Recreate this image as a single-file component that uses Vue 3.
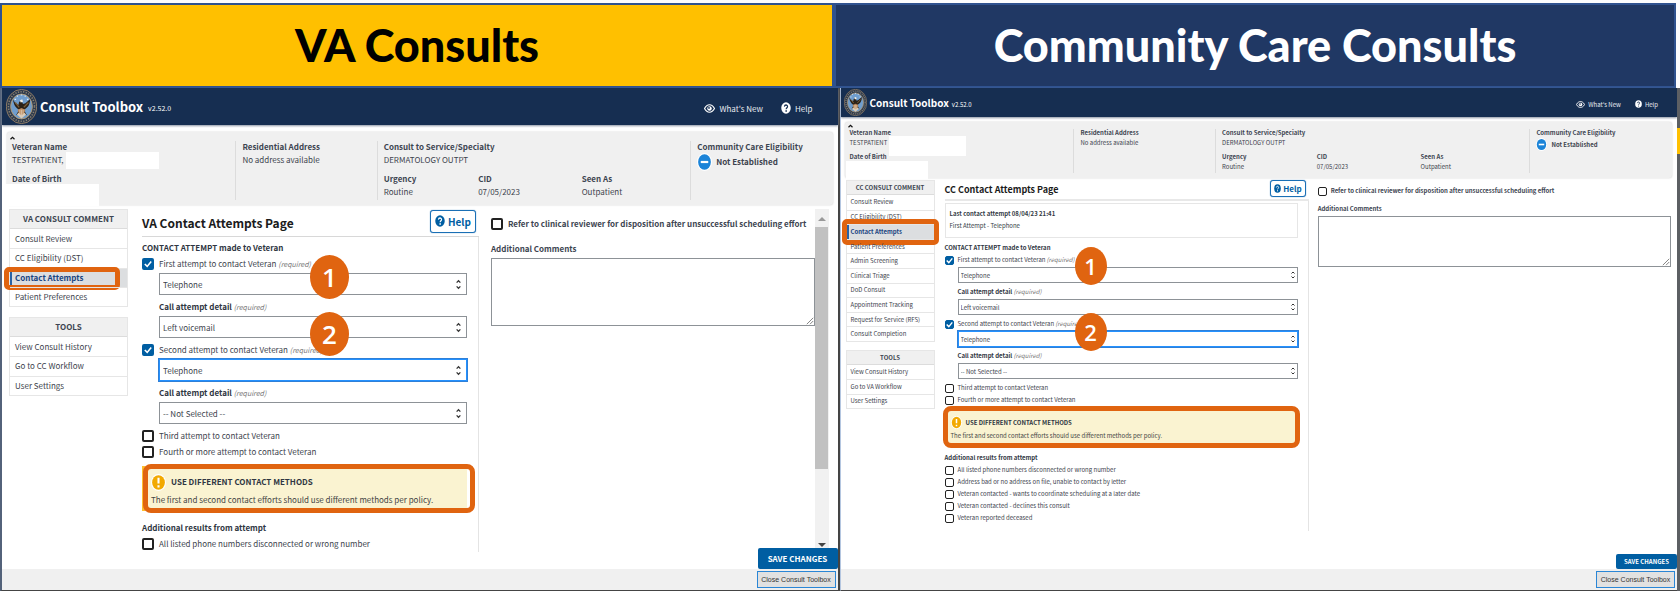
<script setup>
import { reactive } from 'vue'

const methods = ['Telephone', 'Letter', '-- Not Selected --']
const details = ['-- Not Selected --', 'Left voicemail', 'No answer']
const tools = (other) => ['View Consult History', `Go to ${other} Workflow`, 'User Settings']

const panels = reactive([
  {
    id: 'va',
    title: 'VA Contact Attempts Page',
    name: 'TESTPATIENT,',
    menuTitle: 'VA CONSULT COMMENT',
    menu: ['Consult Review', 'CC Eligibility (DST)', 'Contact Attempts', 'Patient Preferences'],
    tools: tools('CC'),
    last: null,
    refer: false,
    comments: '',
    scroll: true,
    attempts: [
      { label: 'First attempt to contact Veteran', on: true, method: 'Telephone', detail: 'Left voicemail', focus: false },
      { label: 'Second attempt to contact Veteran', on: true, method: 'Telephone', detail: '-- Not Selected --', focus: true },
    ],
    more: [
      { label: 'Third attempt to contact Veteran', on: false },
      { label: 'Fourth or more attempt to contact Veteran', on: false },
    ],
    results: [{ label: 'All listed phone numbers disconnected or wrong number', on: false }],
  },
  {
    id: 'cc',
    title: 'CC Contact Attempts Page',
    name: 'TESTPATIENT',
    menuTitle: 'CC CONSULT COMMENT',
    menu: [
      'Consult Review', 'CC Eligibility (DST)', 'Contact Attempts', 'Patient Preferences', 'Admin Screening',
      'Clinical Triage', 'DoD Consult', 'Appointment Tracking', 'Request for Service (RFS)', 'Consult Completion',
    ],
    tools: tools('VA'),
    last: { when: 'Last contact attempt 08/04/23 21:41', what: 'First Attempt - Telephone' },
    refer: false,
    comments: '',
    scroll: false,
    attempts: [
      { label: 'First attempt to contact Veteran', on: true, method: 'Telephone', detail: 'Left voicemail', focus: false },
      { label: 'Second attempt to contact Veteran', on: true, method: 'Telephone', detail: '-- Not Selected --', focus: true },
    ],
    more: [
      { label: 'Third attempt to contact Veteran', on: false },
      { label: 'Fourth or more attempt to contact Veteran', on: false },
    ],
    results: [
      { label: 'All listed phone numbers disconnected or wrong number', on: false },
      { label: 'Address bad or no address on file, unable to contact by letter', on: false },
      { label: 'Veteran contacted - wants to coordinate scheduling at a later date', on: false },
      { label: 'Veteran contacted - declines this consult', on: false },
      { label: 'Veteran reported deceased', on: false },
    ],
  },
])
</script>

<template>
  <div class="page">
    <div class="banners">
      <h1 class="banner banner-va">VA Consults</h1>
      <h1 class="banner banner-cc">Community Care Consults</h1>
    </div>

    <div class="windows">
      <section v-for="p in panels" :key="p.id" class="window" :class="p.id">
        <header class="top">
          <svg class="seal" viewBox="0 0 40 44" preserveAspectRatio="none" aria-hidden="true">
            <ellipse cx="20" cy="22" rx="19.5" ry="21.5" fill="#2d3a4d" stroke="#a98d6b" stroke-width="1" />
            <ellipse cx="20" cy="22" rx="16.8" ry="18.6" fill="none" stroke="#8b8273" stroke-width="2" stroke-dasharray="1.6 1.8" />
            <ellipse cx="20" cy="22" rx="14" ry="15.6" fill="#6f9dcd" stroke="#b59a72" stroke-width="1.2" />
            <path d="M11 13h2M27 13h2M14 9h1.5M24 9h1.5M19 7.5h2" stroke="#dce8f5" stroke-width="1.4" />
            <path d="M9 13c1 8 4 11 8 13l-4 7 5-2 2 4 2-4 5 2-4-7c5-2 8-6 8-13l-6 5-3 1-2-4-3 1-1 4-4-2z" fill="#2a2118" />
            <path d="M12 17l5 6M29 17l-6 6" stroke="#7b5d36" stroke-width="1.6" />
            <path d="M18 14l3-1 1 3-3 1z" fill="#f3efe6" />
            <path d="M15 26l5-2 5 2-2 6-3 3-3-3z" fill="#b9875a" />
            <path d="M14 32l6 5 6-5-2-2-4 3-4-3z" fill="#d9cbb8" />
            <path d="M18 26v6M20 26v7M22 26v6" stroke="#e8d9c4" stroke-width=".8" />
          </svg>
          <strong class="brand">Consult Toolbox</strong>
          <span class="version">v2.52.0</span>
          <nav class="top-links">
            <a href="#whats-new">
              <svg class="eye" viewBox="0 0 22 18" preserveAspectRatio="none" aria-hidden="true">
                <path d="M1 9C4 3.500 7.500 1.500 11 1.500S18 3.500 21 9c-3 5.500-6.500 7.500-10 7.500S4 14.500 1 9z" fill="none" stroke="#fff" stroke-width="2.400" />
                <circle cx="11" cy="9" r="4.500" fill="#fff" />
                <circle cx="10" cy="7.800" r="1.800" fill="#162e51" />
              </svg>What's New
            </a>
            <a href="#help">
              <svg class="q" viewBox="0 0 20 20" preserveAspectRatio="none" aria-hidden="true">
                <circle cx="10" cy="10" r="9.500" fill="#fff" />
                <path d="M6.800 7.800C7 5.800 8.400 5 10 5c1.800 0 3.200 1 3.200 2.600 0 2.200-3 2.200-3 4.400" fill="none" stroke="#162e51" stroke-width="2.200" />
                <circle cx="10.200" cy="15" r="1.500" fill="#162e51" />
              </svg>Help
            </a>
          </nav>
        </header>

        <section class="patient" aria-label="Patient">
          <svg class="caret" viewBox="0 0 10 7" aria-hidden="true"><path d="M1 6l4-4 4 4" fill="none" stroke="#111" stroke-width="2.400" /></svg>
          <dl class="who">
            <dt>Veteran Name</dt>
            <dd>{{ p.name }}</dd>
            <dt>Date of Birth</dt>
          </dl>
          <i class="mask mask-name"></i>
          <i class="mask mask-dob"></i>
          <dl>
            <dt>Residential Address</dt>
            <dd>No address available</dd>
          </dl>
          <div class="consult">
            <dl class="wide"><dt>Consult to Service/Specialty</dt><dd>DERMATOLOGY OUTPT</dd></dl>
            <dl><dt>Urgency</dt><dd>Routine</dd></dl>
            <dl><dt>CID</dt><dd>07/05/2023</dd></dl>
            <dl><dt>Seen As</dt><dd>Outpatient</dd></dl>
          </div>
          <dl>
            <dt>Community Care Eligibility</dt>
            <dd class="status">
              <svg viewBox="0 0 16 18" preserveAspectRatio="none" aria-hidden="true">
                <ellipse cx="8" cy="9" rx="8" ry="9" fill="#fff" />
                <ellipse cx="8" cy="9" rx="6.800" ry="7.700" fill="#1c84d8" />
                <path d="M4 9h8" stroke="#fff" stroke-width="2.200" />
              </svg>
              Not Established
            </dd>
          </dl>
        </section>

        <div class="body">
          <aside>
            <nav class="menu">
              <h3>{{ p.menuTitle }}</h3>
              <ul>
                <li v-for="m in p.menu" :key="m" :class="{ active: m === 'Contact Attempts' }">
                  <a :href="'#' + p.id + '-' + m.toLowerCase().replace(/[^a-z]+/g, '-')">{{ m }}</a>
                </li>
              </ul>
            </nav>
            <nav class="menu tools">
              <h3>TOOLS</h3>
              <ul>
                <li v-for="m in p.tools" :key="m">
                  <a :href="'#' + p.id + '-' + m.toLowerCase().replace(/[^a-z]+/g, '-')">{{ m }}</a>
                </li>
              </ul>
            </nav>
          </aside>

          <main>
            <div class="title">
              <h2>{{ p.title }}</h2>
              <button type="button" class="help">
                <svg viewBox="0 0 20 20" preserveAspectRatio="none" aria-hidden="true">
                  <circle cx="10" cy="10" r="9.500" fill="#005ea2" />
                  <path d="M6.800 7.800C7 5.800 8.400 5 10 5c1.800 0 3.200 1 3.200 2.600 0 2.200-3 2.200-3 4.400" fill="none" stroke="#fff" stroke-width="2.200" />
                  <circle cx="10.200" cy="15" r="1.500" fill="#fff" />
                </svg>Help
              </button>
            </div>

            <div class="form">
              <div v-if="p.last" class="last">
                <strong>{{ p.last.when }}</strong>
                <span>{{ p.last.what }}</span>
              </div>
              <h3>CONTACT ATTEMPT made to Veteran</h3>
              <div v-for="(a, i) in p.attempts" :key="a.label" class="attempt">
                <label class="check"><input v-model="a.on" type="checkbox" />{{ a.label }} <em>(required)</em></label>
                <div class="pick" :class="{ focus: a.focus }">
                  <select v-model="a.method" :aria-label="a.label + ' method'">
                    <option v-for="m in methods" :key="m">{{ m }}</option>
                  </select>
                  <svg viewBox="0 0 8 16" aria-hidden="true"><path d="M1 5l3-3 3 3M1 11l3 3 3-3" /></svg>
                </div>
                <label class="detail" :for="p.id + '-detail-' + i"><b>Call attempt detail</b> <em>(required)</em></label>
                <div class="pick">
                  <select :id="p.id + '-detail-' + i" v-model="a.detail">
                    <option v-for="d in details" :key="d">{{ d }}</option>
                  </select>
                  <svg viewBox="0 0 8 16" aria-hidden="true"><path d="M1 5l3-3 3 3M1 11l3 3 3-3" /></svg>
                </div>
                <span class="badge">{{ i + 1 }}</span>
              </div>
              <label v-for="c in p.more" :key="c.label" class="check"><input v-model="c.on" type="checkbox" />{{ c.label }}</label>

              <div class="alert" role="alert">
                <strong>
                  <svg viewBox="0 0 16 18" preserveAspectRatio="none" aria-hidden="true">
                    <ellipse cx="8" cy="9" rx="8" ry="9" fill="#fff" />
                    <ellipse cx="8" cy="9" rx="6.800" ry="7.800" fill="#f2a900" />
                    <path d="M8 4v6M8 12v2.200" stroke="#fff" stroke-width="2.200" />
                  </svg>
                  USE DIFFERENT CONTACT METHODS
                </strong>
                <p>The first and second contact efforts should use different methods per policy.</p>
              </div>

              <h3>Additional results from attempt</h3>
              <label v-for="c in p.results" :key="c.label" class="check"><input v-model="c.on" type="checkbox" />{{ c.label }}</label>
            </div>
          </main>

          <div class="side">
            <label class="check refer"><input v-model="p.refer" type="checkbox" />Refer to clinical reviewer for disposition after unsuccessful scheduling effort</label>
            <label class="comments-label" :for="p.id + '-comments'">Additional Comments</label>
            <div class="comments">
              <textarea :id="p.id + '-comments'" v-model="p.comments"></textarea>
              <svg viewBox="0 0 10 10" aria-hidden="true"><path d="M1 9l8-8M5 9l4-4" stroke="#666" fill="none" /></svg>
            </div>
          </div>

          <div v-if="p.scroll" class="scrollbar" aria-hidden="true">
            <svg viewBox="0 0 8 5"><path d="M0 5l4-4 4 4z" fill="#999" /></svg>
            <i></i>
            <svg viewBox="0 0 8 5"><path d="M0 0h8l-4 4z" fill="#444" /></svg>
          </div>
        </div>

        <div class="actions"><button type="button" class="save">SAVE CHANGES</button></div>
        <footer><button type="button" class="close">Close Consult Toolbox</button></footer>
      </section>
      <div class="edge" aria-hidden="true"><i></i></div>
    </div>
  </div>
</template>

<style>
body { margin: 0; background: #fff; }
</style>

<style scoped>
* { box-sizing: border-box; }
h1, h2, h3, p, ul, dl, dd { margin: 0; padding: 0; }
ul { list-style: none; }
a { color: inherit; text-decoration: none; }
button, select, textarea, input { font: inherit; margin: 0; }

.page {
  min-height: 100vh;
  display: flex;
  flex-direction: column;
  padding-top: 3px;
  background: #fcfcfd;
  font-family: "Noto Sans CJK JP", "Open Sans", sans-serif;
  color: #3d434d;
}
.banners { display: flex; padding-right: 4px; }
.banner {
  border: 2px solid #2f528f;
  line-height: 81px;
  font-family: Lato, sans-serif;
  font-weight: 900;
  font-size: 45px;
  text-align: center;
}
.banner-va { flex: 834; background: #ffc000; color: #000; }
.banner-cc { flex: 842; background: #203864; color: #fff; }

.windows { flex: 1; display: flex; }
.window { display: flex; flex-direction: column; background: #fff; border-bottom: 1px solid #444; min-width: 0; }

/* Size set of the larger window */
.va {
  --fs: 8px; --em: 7px; --brand: 13px; --head: 12px; --help: 10px;
  --row: 16px; --pick: 22px; --box: 12px; --gap: 4px; --indent: 17px; --lead: 4px;
  flex: 838;
  border-left: 2px solid #53627a;
  border-right: 2px solid #444;
}
/* Size set of the smaller window */
.cc {
  --fs: 6px; --em: 6px; --brand: 10px; --head: 9px; --help: 8px;
  --row: 12px; --pick: 16px; --box: 9px; --gap: 3px; --indent: 13px; --lead: 3px;
  flex: 839;
  border-left: 1px solid #b4c6e0;
}

.top { display: flex; align-items: center; height: 37px; background: #162e51; color: #fff; padding: 0 25px 0 4px; box-shadow: 0 1px 2px #8a93a3; }
.cc .top { height: 29px; padding: 0 19px 0 3px; }
.seal { width: 31px; height: 35px; }
.cc .seal { width: 23px; height: 27px; }
.brand { font-size: var(--brand); margin-left: 3px; }
.version { font-size: var(--em); margin-left: 5px; padding-top: 3px; }
.cc .version { margin-left: 3px; }
.top-links { margin-left: auto; display: flex; gap: 18px; font-size: var(--fs); padding-top: 3px; }
.cc .top-links { gap: 14px; }
.top-links a { display: flex; align-items: center; gap: 4px; color: #e8ebf0; }
.cc .top-links a { gap: 3px; }
.eye { width: 11px; height: 9px; }
.q { width: 10px; height: 12px; }
.cc .eye { width: 9px; height: 7px; }
.cc .q { width: 7px; height: 8px; }

.patient {
  position: relative;
  display: grid;
  grid-template-columns: 228fr 141fr 313fr 142fr;
  margin: 7px 5px 0;
  height: 73px;
  padding: 9px 0 6px;
  background: #f0f0f0;
  border-radius: 3px;
  box-shadow: 0 0 2px #ccc;
  font-size: var(--fs);
}
.cc .patient { margin: 5px 5px 0 4px; height: 56px; padding: 7px 0 5px; }
.patient > * { min-width: 0; }
.patient > * + dl, .consult { border-left: 1px solid #dcdcdc; padding-left: 6px; }
.patient .who { border: 0; padding-left: 5px; }
.patient dt { font-weight: 700; line-height: 11px; color: #3d4551; white-space: nowrap; }
.patient dd { line-height: 16px; white-space: nowrap; }
.patient .who dd + dt { margin-top: 5px; }
.cc .patient dt { line-height: 8px; }
.cc .patient dd { line-height: 12px; }
.cc .patient .who dd + dt { margin-top: 4px; }
.consult { display: grid; grid-template-columns: 94fr 103fr 108fr; align-content: start; row-gap: 5px; }
.cc .consult { row-gap: 4px; }
.wide { grid-column: 1 / -1; }
.patient .status { display: flex; align-items: center; gap: 4px; font-weight: 700; line-height: 20px; }
.va .status { font-size: 8px; }
.cc .status { font-size: 6px; }
.cc .patient .status { line-height: 15px; }
.status svg { width: 15px; height: 18px; }
.cc .status svg { width: 11px; height: 13px; }
.caret { position: absolute; left: 3px; top: 4px; width: 5px; height: 4px; }
.cc .caret { top: 2px; }
.mask { position: absolute; background: #fff; }
.mask-name { left: 59px; top: 20px; width: 93px; height: 17px; }
.mask-dob { left: -2px; top: 52px; width: 94px; height: 22px; }
.cc .mask-name { left: 44px; top: 14px; width: 77px; height: 20px; }
.cc .mask-dob { left: 1px; top: 39px; width: 82px; height: 18px; }

.body { flex: 1; display: flex; padding: 4px 9px 0 7px; }
.cc .body { padding: 2px 6px 24px 5px; }
aside { flex: 0 0 119px; font-size: var(--fs); }
.cc aside { flex-basis: 89px; }
.menu { border: 1px solid #e6e6e6; }
.tools { margin-top: 10px; }
.cc .tools { margin-top: 8px; }
.menu h3 { font-size: var(--fs); line-height: 18px; text-align: center; background: #f0f0f0; border-bottom: 1px solid #dcdcdc; color: #3d4551; white-space: nowrap; }
.cc .menu h3 { line-height: 13px; }
.menu ul { display: grid; grid-auto-rows: 1fr; min-height: 77px; }
.menu.tools ul { min-height: 58px; }
.cc .menu ul { min-height: 146px; }
.cc .menu.tools ul { min-height: 43px; }
.menu li { position: relative; display: flex; align-items: center; padding-left: 5px; white-space: nowrap; line-height: 12px; }
.menu li + li { border-top: 1px solid #e6e6e6; }
.cc .menu li { padding-left: 4px; }
.menu .active { background: #dcdee0; box-shadow: inset 2px 0 #2a62a5; font-weight: 700; color: #1a4480; }
.active::after { content: ""; position: absolute; inset: -2px 7px -3px -6px; border: 5px solid #e06410; border-radius: 5px; }
.cc .active::after { inset: -6px -5px -6px -5px; }

main { flex: 351 1 0; min-width: 0; padding: 0 0 0 14px; font-size: var(--fs); }
.cc main { flex: 373 1 0; padding: 0 0 0 10px; }
.title { display: flex; justify-content: space-between; align-items: center; height: 28px; border-bottom: 1px solid #d8d8d8; }
.cc .title { height: 21px; border-bottom: 2px solid #e8e8e8; }
.title h2 { font-size: var(--head); line-height: 20px; color: #1b1b1b; white-space: nowrap; }
.cc .title h2 { line-height: 16px; }
.help { display: flex; align-items: center; gap: 3px; height: 23px; padding: 0 4px; margin: 0 3px 3px 0; border: 1px solid #1a6fb5; border-radius: 3px; background: #fff; color: #005ea2; font-weight: 700; font-size: var(--help); box-shadow: 0 0 1px #1a6fb5; }
.cc .help { height: 17px; padding: 0 3px; gap: 2px; }
.help svg { width: 10px; height: 12px; }
.cc .help svg { width: 7px; height: 9px; }

.form { padding: 3px 11px 0 0; border-right: 1px solid #e4e4e4; }
.cc .form { padding: 2px 10px 7px 0; }
.form h3 { font-size: var(--fs); line-height: var(--row); color: #2f3642; white-space: nowrap; }
.last { display: grid; border: 1px solid #e6e6e6; padding: 4px 4px 5px; margin-bottom: 4px; line-height: 12px; color: #333a45; }
.check { display: flex; align-items: center; gap: 5px; line-height: var(--row); height: var(--row); white-space: nowrap; }
.cc .check { gap: 4px; }
.check input { appearance: none; flex: none; width: var(--box); height: var(--box); border: 2px solid #222; border-radius: 2px; background: #fff; }
.cc .check input { border-width: 1px; }
.check input:checked {
  border-color: #005ea2;
  background: #005ea2 url("data:image/svg+xml,%3Csvg xmlns='http://www.w3.org/2000/svg' viewBox='0 0 10 10'%3E%3Cpath d='M1 5l3 3 5-6' fill='none' stroke='white' stroke-width='2'/%3E%3C/svg%3E") center / 8px 8px no-repeat;
}
.cc .check input:checked { background-size: 7px 7px; }
em { font-size: var(--em); line-height: 1; color: #777; }
.check em { margin-left: -3px; }
.attempt { position: relative; display: grid; padding-bottom: var(--gap); }
.pick { position: relative; margin-left: var(--indent); display: grid; margin-top: 1px; }
.pick select { appearance: none; height: var(--pick); padding: 0 3px; border: 1px solid #8d9297; border-radius: 0; background: #fff; color: #3d434d; }
.cc .pick select { padding: 0 2px; }
.pick.focus select { border-color: #2491ff; outline: 1px solid #2f80d8; }
.pick svg { position: absolute; right: 6px; top: 25%; height: 50%; width: 5px; fill: none; stroke: #333; stroke-width: 2; pointer-events: none; }
.cc .pick svg { right: 3px; width: 4px; }
.detail { margin: var(--lead) 0 0 var(--indent); line-height: var(--row); color: #2f3642; white-space: nowrap; }
.badge {
  position: absolute; left: 168px; top: -1px; z-index: 2;
  display: grid; place-items: center;
  width: 39px; height: 44px; border-radius: 50%;
  background: #e06410; color: #fff; font: 600 26px "Open Sans", sans-serif;
}
.attempt + .attempt .badge { top: -30px; }
.cc .badge { left: 130px; top: -7px; width: 32px; height: 38px; font-size: 22px; }
.cc .attempt + .attempt .badge { top: -5px; }

.alert { position: relative; display: grid; margin: 6px 0 9px; padding: 7px 4px 2px 6px; background: #faf3d1; border-left: 3px solid #ffbe2e; color: #2f3642; }
.alert::after { content: ""; position: absolute; inset: -2px -8px -2px -2px; border: 5px solid #e06410; border-radius: 8px; }
.alert strong { display: flex; align-items: center; gap: 5px; line-height: 18px; }
.alert p { line-height: 18px; white-space: nowrap; color: #444; }
.alert svg { width: 15px; height: 17px; }
.cc .alert { margin: 3px 0 7px; padding: 7px 2px 3px 3px; }
.cc .alert::after { inset: -3px -2px -3px -5px; }
.cc .alert strong { line-height: 13px; gap: 4px; }
.cc .alert p { line-height: 13px; }
.cc .alert svg { width: 11px; height: 13px; }

.side { flex: 337 1 0; min-width: 0; display: flex; flex-direction: column; padding: 7px 0 0 12px; font-size: var(--fs); }
.cc .side { flex: 362 1 0; padding: 5px 0 0 9px; }
.check.refer, .comments-label { font-weight: 700; color: #3d4551; }
.comments-label { line-height: var(--row); margin-top: 9px; }
.cc .comments-label { margin-top: 6px; }
.comments { position: relative; display: grid; margin-top: 1px; }
textarea { resize: none; width: 100%; height: 68px; border: 1px solid #8d9297; border-radius: 0; padding: 4px; background: #fff; }
.cc textarea { height: 51px; }
.comments svg { position: absolute; right: 1px; bottom: 1px; width: 8px; height: 8px; }

.scrollbar { flex: 0 0 14px; display: flex; flex-direction: column; align-items: center; background: #f1f1f1; padding: 7px 0 4px; }
.scrollbar svg { width: 8px; height: 5px; }
.scrollbar i { width: 13px; flex: 1; margin: 6px 0 74px; background: #c1c1c1; }

.actions { display: flex; justify-content: flex-end; margin-top: -4px; }
.save { height: 21px; width: 80px; padding: 0; border: 0; border-radius: 2px; background: #005ea2; color: #fff; font-weight: 700; font-size: var(--fs); white-space: nowrap; }
.cc .save { height: 15px; width: 61px; }
footer { display: flex; justify-content: flex-end; align-items: center; height: 21px; padding-right: 2px; background: #f0f0f0; }
.close { height: 17px; width: 79px; padding: 0; border: 1px solid #2a86d6; background: #e1e1e1; color: #333; font: 7px "Liberation Sans", sans-serif; white-space: nowrap; }

.edge { flex: 0 0 3px; background: #5c5f63; padding-top: 40px; }
.edge i { display: block; height: 26px; background: #ffc000; }
</style>
